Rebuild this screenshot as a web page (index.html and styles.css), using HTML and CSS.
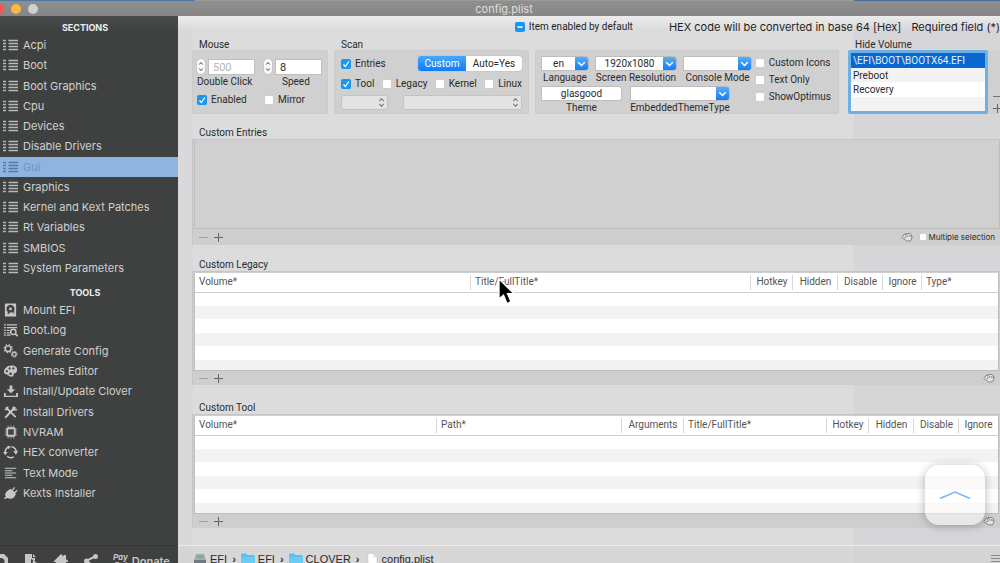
FILE: index.html
```html
<!DOCTYPE html>
<html lang="en">
<head>
<meta charset="utf-8">
<title>config.plist</title>
<link rel="stylesheet" href="styles.css">
</head>
<body>
<svg class="defs" aria-hidden="true">
  <symbol id="list" viewBox="0 0 15 12"><path d="M0 1.500h3M5.500 1.500h9.500M0 4.500h3M5.500 4.500h9.500M0 7.500h3M5.500 7.500h9.500M0 10.500h3M5.500 10.500h9.500" stroke="currentColor" stroke-width="1.700" fill="none"/></symbol>
  <symbol id="hand" viewBox="0 0 12 10"><path d="M1 5.500 3.500 2 5 3V1.500l1.500.2L8 1.300l1.300.7 1.200.8.5 3-1.500 3-4 .2L4 7.500 2.500 7 1 5.500ZM3.500 5.500h1.500M5 3.500v1.300M6.700 3.200v1.500M8.300 3.200v1.500M9.800 3.700v1.300" fill="#e4e4e4" stroke="#6b6b6b" stroke-width=".8" stroke-linejoin="round"/></symbol>
  <symbol id="folder" viewBox="0 0 14 12"><path d="M0 2Q0 .5 1.500.5H5L6.200 2H12.500Q14 2 14 3.500V12H0Z" fill="#56c0ee"/><path d="M0 4h14v8H0Z" fill="#6accf5"/></symbol>
</svg>
<div class="window">
  <header class="titlebar">
    <div class="lights"><button class="light close" aria-label="Close"></button><button class="light minimize" aria-label="Minimize"></button><button class="light zoom" aria-label="Zoom"></button></div>
    <h1>config.plist</h1>
  </header>
  <div class="body">
    <aside class="sidebar">
      <h2>SECTIONS</h2>
      <nav class="menu sections" aria-label="Sections">
        <a href="#"><svg><use href="#list"/></svg>Acpi</a>
        <a href="#"><svg><use href="#list"/></svg>Boot</a>
        <a href="#"><svg><use href="#list"/></svg>Boot Graphics</a>
        <a href="#"><svg><use href="#list"/></svg>Cpu</a>
        <a href="#"><svg><use href="#list"/></svg>Devices</a>
        <a href="#"><svg><use href="#list"/></svg>Disable Drivers</a>
        <a href="#" class="selected" aria-current="page"><svg><use href="#list"/></svg>Gui</a>
        <a href="#"><svg><use href="#list"/></svg>Graphics</a>
        <a href="#"><svg><use href="#list"/></svg>Kernel and Kext Patches</a>
        <a href="#"><svg><use href="#list"/></svg>Rt Variables</a>
        <a href="#"><svg><use href="#list"/></svg>SMBIOS</a>
        <a href="#"><svg><use href="#list"/></svg>System Parameters</a>
      </nav>
      <h2 class="second">TOOLS</h2>
      <nav class="menu tools" aria-label="Tools">
        <a href="#"><svg viewBox="0 0 16 14"><path fill-rule="evenodd" fill="currentColor" d="M3 0h10q1 0 1 1v12q0 1-1 1H3q-1 0-1-1V1q0-1 1-1ZM8 1.500a4.300 4.300 0 0 0-3 7.400V12l2.500-2.400a4.300 4.300 0 0 0 3.300-.6L12 12V7.500A4.300 4.300 0 0 0 8 1.500ZM8 4.300a1.500 1.500 0 1 1 0 3 1.500 1.500 0 0 1 0-3Z"/></svg>Mount EFI</a>
        <a href="#"><svg viewBox="0 0 16 14"><path d="M1 1.500h2M4 1.500h11M1 4.500h2M4 4.500h11M1 7.500h2M4 7.500h3M1 10h2M4 10h3M1 12.500h2M4 12.500h4" stroke="currentColor" stroke-width="1.300"/><circle cx="11" cy="9" r="2.800" fill="none" stroke="currentColor" stroke-width="1.500"/><path d="m13 11 2.500 2.500" stroke="currentColor" stroke-width="1.800"/></svg>Boot.log</a>
        <a href="#"><svg viewBox="0 0 16 14"><circle cx="5.500" cy="4.500" r="3" fill="none" stroke="currentColor" stroke-width="1.500"/><circle cx="5.500" cy="4.500" r="4.200" fill="none" stroke="currentColor" stroke-width="1.400" stroke-dasharray="1.600 1.700"/><circle cx="12" cy="10.500" r="2" fill="none" stroke="currentColor" stroke-width="1.300"/><circle cx="12" cy="10.500" r="3" fill="none" stroke="currentColor" stroke-width="1.200" stroke-dasharray="1.200 1.150"/></svg>Generate Config</a>
        <a href="#"><svg viewBox="0 0 16 14"><path fill="currentColor" fill-rule="evenodd" d="M9 1c4 0 6.500 2 6 5.500S12 9 11.500 10 12 13 9 13 5 11 3.500 10.500 1 10 1 7.500 4 1 9 1ZM4 6a1.200 1.200 0 1 0 .1 0ZM7 3a1.200 1.200 0 1 0 .1 0ZM11 3a1.200 1.200 0 1 0 .1 0ZM8 8.500a1.400 1.400 0 1 0 .1 0Z"/></svg>Themes Editor</a>
        <a href="#"><svg viewBox="0 0 16 14"><path fill="currentColor" d="M7 1h3v4h3L8.500 9.500 4 5h3ZM1 9h2v3h11V9h2v4.500H1Z"/></svg>Install/Update Clover</a>
        <a href="#"><svg viewBox="0 0 16 14"><path d="m3 2 10.500 10.500" stroke="currentColor" stroke-width="2"/><path d="M12.500 2.500 8 7 3 12.500" stroke="currentColor" stroke-width="2.200" stroke-linecap="round"/><path d="M2 4.500 4.700 4 5 1.300M11 1v3.500h3.800" fill="none" stroke="currentColor" stroke-width="1.700"/></svg>Install Drivers</a>
        <a href="#"><svg viewBox="0 0 16 14"><path d="M5.500 0v14M8.500 0v14M11.500 0v14M2 4h13M2 7h13M2 10h13" stroke="currentColor" stroke-width="1.200" opacity=".65"/><rect x="4.500" y="3" width="8" height="8" rx="1" fill="#404242" stroke="currentColor" stroke-width="2"/></svg>NVRAM</a>
        <a href="#"><svg viewBox="0 0 16 14"><path d="M6 1.600A6 6 0 0 0 2.500 8M4.500 11.500a6 6 0 0 0 7 .7M14 8.500A6 6 0 0 0 9 1.200" fill="none" stroke="currentColor" stroke-width="1.600"/><path fill="currentColor" d="M0 7h5L2.500 10.500ZM11 6h5l-2.300 4ZM5 0l3.500 1.500L5.500 4Z"/></svg>HEX converter</a>
        <a href="#"><svg viewBox="0 0 16 14"><path d="M2 2h12M2 4.500h8M2 7h12M2 9.500h8M2 12h12" stroke="currentColor" stroke-width="1.100"/></svg>Text Mode</a>
        <a href="#"><svg viewBox="0 0 16 14"><path fill="currentColor" d="M1 12.500 3 11q-2-4 2-6.500 2-1.200 3.200-2l1 1.200L12 .5l1 1-2.500 3L12 6l2.500-2.500 1 1L13 7.200l.7 1q-2 5-6.200 4.800-1.500 0-2.700-.8L2 13.500Z"/></svg>Kexts Installer</a>
      </nav>
      <footer class="actions">
        <button aria-label="Search file"><svg viewBox="0 0 16 16"><path fill="currentColor" fill-rule="evenodd" d="M0 1h11l4 4v11H0ZM8 5a3.500 3.500 0 1 0 .1 0Z"/></svg></button>
        <button aria-label="Export file"><svg viewBox="0 0 16 16"><path fill="currentColor" d="M2 1h7v4h3v3L8 6v10H2ZM10 1l3 3h-3Z"/><path fill="currentColor" d="m10 7 5 4-4 5H9Z"/></svg></button>
        <button aria-label="Home"><svg viewBox="0 0 16 16"><path fill="currentColor" d="m1 8 7-7 2.500 2.500V2H13v4l2 2v1h-2v7H9v-5H7v5H3V9H1Z"/></svg></button>
        <button aria-label="Share"><svg viewBox="0 0 16 16"><path d="M13 3 3 8l10 6" fill="none" stroke="currentColor" stroke-width="2"/><g fill="currentColor"><circle cx="12.500" cy="3.500" r="2.500"/><circle cx="3.500" cy="8" r="2.500"/><circle cx="12.500" cy="14" r="2.500"/></g></svg></button>
        <button class="donate"><i>Pay<br>Pal</i><span>Donate</span></button>
      </footer>
    </aside>
    <main class="main">
      <div class="content">
        <div class="legend">
          <label class="check default-item"><input type="checkbox" class="mixed"><span>Item enabled by default</span></label>
          <span>HEX code will be converted in base 64 [Hex]</span>
          <span class="required">Required field (*)</span>
        </div>
        <div class="groups">
          <section class="group mouse">
            <h3>Mouse</h3>
            <div class="panel">
              <div class="mouse-fields">
                <div class="spin"><button class="stepper" aria-label="Step double click"><svg viewBox="0 0 8 15"><path d="m2.200 5.500 1.800-2 1.800 2M2.200 9.500l1.800 2 1.800-2"/></svg></button><input id="dbl" type="text" placeholder="500"><label for="dbl">Double Click</label></div>
                <div class="spin"><button class="stepper" aria-label="Step speed"><svg viewBox="0 0 8 15"><path d="m2.200 5.500 1.800-2 1.800 2M2.200 9.500l1.800 2 1.800-2"/></svg></button><input id="speed" type="text" value="8"><label class="speed" for="speed">Speed</label></div>
              </div>
              <div class="mouse-checks">
                <label class="check"><input type="checkbox" checked><span>Enabled</span></label>
                <label class="check"><input type="checkbox"><span>Mirror</span></label>
              </div>
            </div>
          </section>
          <section class="group scan">
            <h3>Scan</h3>
            <div class="panel">
              <div class="row">
                <label class="check"><input type="checkbox" checked><span>Entries</span></label>
                <div class="segmented"><button class="on">Custom</button><button>Auto=Yes</button></div>
              </div>
              <div class="row kinds">
                <label class="check"><input type="checkbox" checked><span>Tool</span></label>
                <label class="check"><input type="checkbox"><span>Legacy</span></label>
                <label class="check"><input type="checkbox"><span>Kernel</span></label>
                <label class="check"><input type="checkbox"><span>Linux</span></label>
              </div>
              <div class="row selects">
                <div class="popup small"><select aria-label="Legacy mode"><option></option></select><svg viewBox="0 0 8 12"><path d="m1.500 4.500 2.500-3 2.500 3M1.500 7.500l2.500 3 2.500-3"/></svg></div>
                <div class="popup"><select aria-label="Kernel mode"><option></option></select><svg viewBox="0 0 8 12"><path d="m1.500 4.500 2.500-3 2.500 3M1.500 7.500l2.500 3 2.500-3"/></svg></div>
              </div>
            </div>
          </section>
          <section class="group look">
            <div class="panel">
              <div class="combos">
                <div class="row">
                  <div class="field lang"><div class="combo"><input id="lang" type="text" value="en"><button aria-label="Languages"><svg viewBox="0 0 10 10"><path d="m2.500 4 2.500 2.500L7.500 4"/></svg></button></div><label for="lang">Language</label></div>
                  <div class="field res"><div class="combo"><input id="res" type="text" value="1920x1080"><button aria-label="Resolutions"><svg viewBox="0 0 10 10"><path d="m2.500 4 2.500 2.500L7.500 4"/></svg></button></div><label for="res">Screen Resolution</label></div>
                  <div class="field console"><div class="combo"><input id="console" type="text"><button aria-label="Console modes"><svg viewBox="0 0 10 10"><path d="m2.500 4 2.500 2.500L7.500 4"/></svg></button></div><label for="console">Console Mode</label></div>
                </div>
                <div class="row themes">
                  <div class="field theme"><div class="combo"><input id="theme" type="text" value="glasgood"></div><label for="theme">Theme</label></div>
                  <div class="field embedded"><div class="combo"><input id="embedded" type="text"><button aria-label="Theme types"><svg viewBox="0 0 10 10"><path d="m2.500 4 2.500 2.500L7.500 4"/></svg></button></div><label for="embedded">EmbeddedThemeType</label></div>
                </div>
              </div>
              <div class="options">
                <label class="check"><input type="checkbox"><span>Custom Icons</span></label>
                <label class="check"><input type="checkbox"><span>Text Only</span></label>
                <label class="check"><input type="checkbox"><span>ShowOptimus</span></label>
              </div>
            </div>
          </section>
          <section class="group hide">
            <h3>Hide Volume</h3>
            <div class="panel">
              <ul class="volumes"><li class="selected">\EFI\BOOT\BOOTX64.EFI</li><li>Preboot</li><li>Recovery</li></ul>
              <div class="side-buttons"><button class="minus" aria-label="Remove volume"></button><button class="plus" aria-label="Add volume"></button></div>
            </div>
          </section>
        </div>
        <section class="block entries">
          <h3>Custom Entries</h3>
          <div class="sheet">
            <div class="well"></div>
            <div class="bar"><button class="minus" aria-label="Remove entry"></button><button class="plus" aria-label="Add entry"></button><svg class="grab"><use href="#hand"/></svg><label class="check multi"><input type="checkbox"><span>Multiple selection</span></label></div>
          </div>
        </section>
        <section class="block legacy">
          <h3>Custom Legacy</h3>
          <div class="sheet">
            <div class="grid">
              <table>
                <colgroup><col class="w276"><col><col class="w42"><col class="w45"><col class="w45"><col class="w39"><col class="w76"></colgroup>
                <thead><tr><th>Volume*</th><th>Title/FullTitle*</th><th class="mid">Hotkey</th><th class="mid">Hidden</th><th class="mid">Disable</th><th class="mid">Ignore</th><th>Type*</th></tr></thead>
                <tbody><tr><td colspan="7"></td></tr><tr><td colspan="7"></td></tr><tr><td colspan="7"></td></tr><tr><td colspan="7"></td></tr><tr><td colspan="7"></td></tr><tr><td colspan="7"></td></tr></tbody>
              </table>
            </div>
            <div class="bar"><button class="minus" aria-label="Remove legacy entry"></button><button class="plus" aria-label="Add legacy entry"></button><svg class="grab"><use href="#hand"/></svg></div>
          </div>
        </section>
        <section class="block tool">
          <h3>Custom Tool</h3>
          <div class="sheet">
            <div class="grid">
              <table>
                <colgroup><col class="w242"><col><col class="w62"><col class="w143"><col class="w42"><col class="w45"><col class="w45"><col class="w39"></colgroup>
                <thead><tr><th>Volume*</th><th>Path*</th><th class="mid">Arguments</th><th>Title/FullTitle*</th><th class="mid">Hotkey</th><th class="mid">Hidden</th><th class="mid">Disable</th><th class="mid">Ignore</th></tr></thead>
                <tbody><tr><td colspan="8"></td></tr><tr><td colspan="8"></td></tr><tr><td colspan="8"></td></tr><tr><td colspan="8"></td></tr><tr><td colspan="8"></td></tr><tr><td colspan="8"></td></tr></tbody>
              </table>
            </div>
            <div class="bar"><button class="minus" aria-label="Remove tool"></button><button class="plus" aria-label="Add tool"></button><svg class="grab"><use href="#hand"/></svg></div>
          </div>
        </section>
      </div>
      <footer class="path">
        <svg viewBox="0 0 14 12"><path d="M3 1h8l2 6v5H1V7Z" fill="#a4adb0"/><path d="M1 7h12v5H1Z" fill="#6f7b80"/><path d="M4 2h6l1 3H3Z" fill="#7fa9a5"/></svg><a href="#">EFI</a><b>›</b>
        <svg><use href="#folder"/></svg><a href="#">EFI</a><b>›</b>
        <svg><use href="#folder"/></svg><a href="#">CLOVER</a><b>›</b>
        <svg viewBox="0 0 14 12"><path d="M3 .5h5l4 4V12H3Z" fill="#fff" stroke="#c4c4c4" stroke-width=".6"/><path d="M8 .5v4h4" fill="#e4e4e4"/></svg><a href="#">config.plist</a>
        <button class="lines" aria-label="Menu"><svg viewBox="0 0 12 10"><path d="M0 1.500h12M0 4.500h12M0 7.500h12" stroke="#8b8b8b" stroke-width="1"/></svg></button>
      </footer>
    </main>
  </div>
</div>
<button class="up" aria-label="Scroll up"><svg viewBox="0 0 32 10"><path d="M1 8.500 16 2l15 6.500" fill="none" stroke="#7db7ec" stroke-width="1.500"/></svg></button>
<svg class="pointer" viewBox="0 0 18 28" aria-hidden="true"><path d="M1 1v20l4.500-4 3.500 8.500 4-1.800-3.500-8H16Z" fill="#000" stroke="#fff" stroke-width="1.300"/></svg>
</body>
</html>
```
FILE: styles.css
```css
* { box-sizing: border-box; }
body {
  margin: 0;
  height: 100vh;
  overflow: hidden;
  font: 10px/12px Roboto, "Liberation Sans", sans-serif;
  color: #2b2b2b;
  background: #dcdcdc;
}
h1, h2, h3, ul { margin: 0; padding: 0; font-weight: 400; }
button, input, select { font: inherit; color: inherit; margin: 0; padding: 0; border: 0; }
button { background: none; }
a { color: inherit; text-decoration: none; }
.defs { position: absolute; width: 0; height: 0; }

/* Window frame: the bottom bars run past the lower screen edge */
.window { height: calc(100vh + 9px); display: flex; flex-direction: column; }
.titlebar {
  display: grid;
  grid-template-columns: 1fr auto 1fr;
  align-items: center;
  height: 16px;
  padding-top: 1px;
  background:
    linear-gradient(90deg, #4c78a3 195px, #9b9b9b 195px, #9b9b9b 854px, #4a6c96 854px) top / 100% 1px no-repeat,
    linear-gradient(#8f8f8f, #868686);
}
.titlebar h1 { font: 11px/14px Inter, sans-serif; color: #dedede; padding-left: 8px; }
.lights { display: flex; gap: 7px; margin-left: -6px; }
.light { width: 10px; height: 10px; border-radius: 50%; }
.close { background: #fa5652; }
.minimize { background: #fdb63f; }
.zoom { background: #cfcfcf; }
.body { flex: 1; display: flex; min-height: 0; }

/* Sidebar */
.sidebar {
  width: 178px;
  display: flex;
  flex-direction: column;
  background: linear-gradient(#4a4b4b, #3f4141 16px);
  color: #d0d0d0;
  font-family: Inter, "Liberation Sans", sans-serif;
}
.sidebar h2 {
  font-size: 9px;
  font-weight: 700;
  line-height: 13px;
  text-align: center;
  color: #ececec;
  padding: 5px 8px 1px 0;
}
.sidebar h2.second { padding: 8px 8px 1px 0; }
.menu { display: grid; grid-auto-rows: 1fr; font-size: 11px; }
.sections { height: 243px; }
.tools { height: 203px; }
.menu a { display: flex; align-items: center; gap: 5px; padding-left: 3px; }
.menu svg { width: 15px; height: 12px; color: #b9baba; }
.tools svg { height: 14px; color: #c6c6c6; }
.menu .selected { background: #8fb4dd; color: #6c94c3; }
.menu .selected svg { color: #4f7cae; }
.actions {
  display: flex;
  align-items: flex-start;
  margin-top: auto;
  height: 27px;
  border-top: 1px solid #353636;
  padding-top: 7px;
  gap: 14px;
  color: #c6c6c6;
}
.actions svg { display: block; width: 16px; height: 16px; }
.actions button:first-child { margin-left: -7px; }
.donate { display: flex; gap: 4px; font-size: 11px; font-weight: 600; }
.donate i { font-size: 8px; line-height: 8px; font-weight: 700; }
.donate span { line-height: 16px; }

/* Main area */
.main {
  flex: 1;
  min-width: 0;
  display: flex;
  flex-direction: column;
  background: linear-gradient(#ececec, rgba(236, 236, 236, 0) 14px),
    linear-gradient(90deg, #d9d9dc 15px, #dcdcdc 15px, #dcdcdc 676px, #d6d6d9 676px);
}
.content { flex: 1; padding-left: 14px; }
.legend {
  display: flex;
  justify-content: flex-end;
  height: 22px;
  align-items: center;
  font: 11px/14px Inter, "Liberation Sans", sans-serif;
  white-space: nowrap;
  color: #1f1f1f;
}
.default-item { font: 10px/12px Roboto, sans-serif; margin-right: 36px; }
.required { margin-left: 10px; }
.check { display: flex; align-items: center; gap: 4px; white-space: nowrap; }
.check input {
  appearance: none;
  width: 10px;
  height: 10px;
  flex: none;
  border-radius: 2px;
  background: #fff;
  border: 1px solid #cdcdcd;
}
.check input:checked, .check input.mixed {
  border: 0;
  background: #1a97f5 url("data:image/svg+xml,%3Csvg xmlns='http://www.w3.org/2000/svg' viewBox='0 0 10 10'%3E%3Cpath d='M2.500 5.500l1.800 2L7.800 2.500' fill='none' stroke='white' stroke-width='1.300'/%3E%3C/svg%3E");
}
.check input.mixed {
  background-image: url("data:image/svg+xml,%3Csvg xmlns='http://www.w3.org/2000/svg' viewBox='0 0 10 10'%3E%3Cpath d='M2.500 5h5' stroke='white' stroke-width='1.500'/%3E%3C/svg%3E");
}
.groups { display: grid; grid-template-columns: 136px 195px 304px 1fr; column-gap: 6px; height: 76px; }
.group { display: flex; flex-direction: column; min-width: 0; }
h3 { font-size: 10px; line-height: 14px; height: 12px; padding-left: 7px; white-space: nowrap; }
.panel { background: #d0d0d0; border: 1px solid #cbcbcb; border-radius: 2px; height: 64px; }
.look { justify-content: flex-end; }
.row { display: flex; align-items: center; justify-content: space-between; min-width: 0; }

.mouse .panel { padding: 8px 5px 0 4px; }
.mouse-fields, .mouse-checks { display: grid; grid-template-columns: 67px 1fr; }
.spin { display: grid; grid-template-columns: 8px 47px; column-gap: 3px; }
.spin input { height: 16px; padding-left: 4px; font-size: 11px; background: #fff; border: 1px solid #bfbfbf; min-width: 0; }
.spin input::placeholder { color: #b5b5b5; opacity: 1; }
.spin label { grid-column: 1 / 3; line-height: 14px; white-space: nowrap; }
.spin .speed { padding-left: 18px; }
.stepper { height: 15px; border-radius: 4px; background: #fafafa; box-shadow: 0 0 1px #888; }
.stepper svg { display: block; width: 8px; height: 15px; fill: none; stroke: #444; stroke-width: 1px; }
.mouse-checks { padding-top: 5px; }

.scan .panel { padding: 5px 6px 0; }
.segmented { display: flex; border-radius: 3px; overflow: hidden; height: 15px; background: #fff; box-shadow: 0 0 1px #888; }
.segmented button { width: 56px; line-height: 13px; }
.segmented .on { width: 48px; color: #fff; background: linear-gradient(#46a8fa, #0c7dfb); }
.kinds { padding-top: 7px; }
.selects { padding-top: 5px; gap: 15px; }
.popup { position: relative; flex: 1; height: 15px; }
.popup.small { flex: 0 0 47px; }
.popup select { appearance: none; display: block; width: 100%; height: 15px; border-radius: 3px; background: #e3e3e3; border: 1px solid #c3c3c3; }
.popup svg { position: absolute; right: 3px; top: 2px; width: 7px; height: 11px; fill: none; stroke: #777; stroke-width: 1.2px; }

.look .panel { display: flex; justify-content: space-between; padding: 5px 7px 0 5px; }
.combos { width: 211px; }
.field { display: flex; flex-direction: column; text-align: center; }
.field label { white-space: nowrap; line-height: 13px; }
.themes { padding-top: 2px; justify-content: flex-start; gap: 8px; }
.combo { display: flex; height: 15px; border: 1px solid #bdbdbd; background: #fff; border-radius: 0 3px 3px 0; overflow: hidden; }
.combo input { flex: 1; min-width: 0; text-align: center; background: none; }
.combo button { width: 13px; background: linear-gradient(#57aef9, #0f7ff8); }
.combo svg { display: block; width: 13px; height: 13px; fill: none; stroke: #fff; stroke-width: 1.2px; }
.lang { width: 48px; }
.res { width: 82px; }
.console { width: 69px; }
.theme { width: 81px; }
.embedded { width: 100px; }
.options { display: flex; flex-direction: column; gap: 5px; padding-top: 1px; }

.hide h3 { padding-left: 10px; }
.hide .panel { display: flex; margin-left: 3px; border: 0; }
.volumes {
  list-style: none;
  flex: 1;
  border: 3px solid #6eb0e4;
  border-radius: 2px;
  background: linear-gradient(#fff 44px, #f3f3f3 44px);
  white-space: nowrap;
}
.volumes li { height: 15px; line-height: 15px; padding-left: 2px; }
.volumes li:nth-child(2) { background: #f3f3f3; height: 14px; }
.volumes .selected { background: #0768d2; color: #e6f0fa; }
.side-buttons { width: 12px; display: flex; flex-direction: column; justify-content: flex-end; padding-left: 4px; }
.minus, .plus { width: 10px; height: 12px; background: linear-gradient(#777, #777) center / 9px 1px no-repeat; }
.plus { background: linear-gradient(#666, #666) center / 9px 1px no-repeat, linear-gradient(#666, #666) center / 1px 9px no-repeat; }

/* Titled lists */
.block h3 { height: 13px; }
.entries { padding-top: 12px; }
.legacy { padding-top: 13px; }
.tool { padding-top: 16px; }
.sheet { background: #cecece; border: 1px solid #c5c5c5; border-width: 1px 0 0 1px; }
.well { height: 89px; margin-left: 1px; background: #d0d0d0; border: 1px solid #bebebe; border-top: 0; }
.bar { height: 14px; display: flex; align-items: center; padding: 0 5px 0 5px; }
.entries .bar { height: 16px; }
.bar .minus { opacity: .5; margin-right: 5px; }
.grab { width: 12px; height: 10px; margin-left: auto; }
.multi { font: 8px/10px Inter, sans-serif; gap: 2px; margin-left: 6px; }
.multi input { width: 8px; height: 8px; }
.grid { margin: 1px 1px 0; height: 98px; overflow: hidden; border: 1px solid #bdbdbd; border-top: 0; background: #fff; }
table { width: 100%; border-collapse: collapse; table-layout: fixed; }
th {
  height: 19px;
  padding: 0 0 0 4px;
  font-weight: 400;
  text-align: left;
  color: #555;
  white-space: nowrap;
  border-bottom: 1px solid #d0d0d0;
  background: linear-gradient(#d8d8d8, #d8d8d8) right center / 1px 15px no-repeat;
}
th:last-child { background: none; }
th.mid { padding: 0; text-align: center; }
td { padding: 0; height: 14px; }
tr:nth-child(even) td { height: 13px; background: #f3f3f3; }
.w276 { width: 276px; }
.w242 { width: 242px; }
.w143 { width: 143px; }
.w76 { width: 76px; }
.w62 { width: 62px; }
.w45 { width: 45px; }
.w42 { width: 42px; }
.w39 { width: 39px; }

.path {
  height: 27px;
  display: flex;
  align-items: center;
  padding-left: 15px;
  gap: 3px;
  font: 11px/10px "Liberation Sans", sans-serif;
  border-top: 1px solid #ececec;
  background: rgba(210, 210, 210, .5);
}
.path svg { width: 14px; height: 12px; }
.path b { margin: 0 2px; }
.path .lines { margin-left: auto; width: 9px; overflow: hidden; }
.path .lines svg { display: block; width: 12px; height: 10px; }

/* Overlays */
.up {
  position: absolute;
  right: 15px;
  bottom: 38px;
  width: 60px;
  height: 60px;
  border-radius: 14px;
  background: rgba(255, 255, 255, .5);
  box-shadow: 0 1px 10px rgba(0, 0, 0, .28);
}
.up svg { display: block; width: 32px; height: 10px; margin: 0 auto; }
.pointer { position: absolute; left: 498px; top: 278px; width: 18px; height: 28px; }
```
